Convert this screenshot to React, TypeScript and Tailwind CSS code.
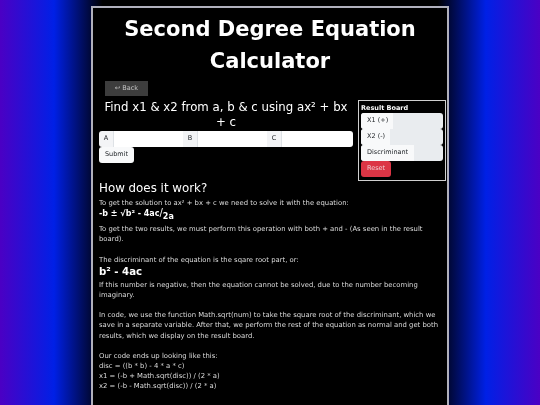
import React from 'react';

function Field({ label, wide }: { label: string; wide?: boolean }) {
    return (
        <>
            <span className="w-[15px] shrink-0 bg-[#f3f4f6] border-r border-[#dee2e6] flex items-center justify-center text-[6.5px] text-[#212529]">{label}</span>
            <span className={wide ? 'w-[69px] shrink-0 bg-white' : 'flex-1 bg-white'} />
        </>
    );
}

function ResultRow({ label, w }: { label: string; w: string }) {
    return (
        <div className="h-[16px] bg-[#e9ecef] rounded-[3px] flex overflow-hidden">
            <span className={`${w} bg-[#f8f9fa] flex items-center pl-[6px] text-[6.5px] text-[#212529]`}>{label}</span>
        </div>
    );
}

export default function App() {
    return (
        <div className="h-[405px] overflow-hidden bg-[linear-gradient(to_right,#4b00c4_0%,#0020e6_10%,#000_19%,#000_81%,#0020e6_90%,#4b00c4_100%)] font-['DejaVu_Sans',sans-serif]">
            <div className="ml-[91px] pt-[6px] w-[358px]">
                <div className="h-[420px] bg-black border-2 border-[#b0b0bc] text-white">
                    <div className="[will-change:transform]">
                        <h1 className="text-center font-bold text-[21px] leading-[32px] pt-[5px]">Second Degree Equation Calculator</h1>
                        <button className="ml-[12px] mt-[4px] w-[43px] h-[15px] bg-[#3d3d3d] text-[#c4c4c4] text-[6.5px] flex items-center justify-center">↩ Back</button>
                        <div className="flex pl-[6px] gap-[5px] mt-[4px]">
                            <div className="w-[254px]">
                                <h2 className="text-center text-[11.75px] leading-[14.5px]">Find x1 &amp; x2 from a, b &amp; c using ax² + bx + c</h2>
                                <div className="flex h-[16px] mt-[2px] rounded-[3px] overflow-hidden">
                                    <Field label="A" wide />
                                    <Field label="B" wide />
                                    <Field label="C" />
                                </div>
                                <button className="block w-[35px] h-[16px] bg-[#f8f9fa] text-[#212529] text-[6.5px] rounded-[3px]">Submit</button>
                            </div>
                            <div className="w-[88px] h-[81px] border border-[#d0d0d0] px-[2px] pt-[1px]">
                                <div className="font-bold text-[6.5px] leading-[10px] mt-[1px]">Result Board</div>
                                <ResultRow label="X1 (+)" w="w-[32px]" />
                                <ResultRow label="X2 (-)" w="w-[29px]" />
                                <ResultRow label="Discriminant" w="w-[53px]" />
                                <button className="block w-[30px] h-[16px] bg-[#dc3545] text-[#f0d0d4] text-[6.5px] rounded-[3px]">Reset</button>
                            </div>
                        </div>
                        <div className="pl-[6px] pr-[5px] mt-[-1px] text-[6.85px] leading-[10.2px] text-[#dcdcdc]">
                            <h3 className="text-[11.85px] leading-[16px] text-white">How does it work?</h3>
                            <p className="mt-[2px]">To get the solution to ax² + bx + c we need to solve it with the equation:</p>
                            <p className="font-bold text-[8px] leading-[10px] text-white">-b ± √b² - 4ac<span className="text-[10px] font-normal">/</span><span className="relative top-[3px]">2a</span></p>
                            <p className="mt-[5px]">To get the two results, we must perform this operation with both + and - (As seen in the result board).</p>
                            <p className="mt-[10px]">The discriminant of the equation is the sqare root part, or:</p>
                            <p className="font-bold text-[10.2px] leading-[14px] text-white">b² - 4ac</p>
                            <p className="mt-[1px]">If this number is negative, then the equation cannot be solved, due to the number becoming imaginary.</p>
                            <p className="mt-[10px]">In code, we use the function Math.sqrt(num) to take the square root of the discriminant, which we save in a separate variable. After that, we perform the rest of the equation as normal and get both results, which we display on the result board.</p>
                            <p className="mt-[10px]">Our code ends up looking like this:</p>
                            <p>disc = ((b * b) - 4 * a * c)</p>
                            <p>x1 = (-b + Math.sqrt(disc)) / (2 * a)</p>
                            <p>x2 = (-b - Math.sqrt(disc)) / (2 * a)</p>
                        </div>
                    </div>
                </div>
            </div>
        </div>
    );
}
